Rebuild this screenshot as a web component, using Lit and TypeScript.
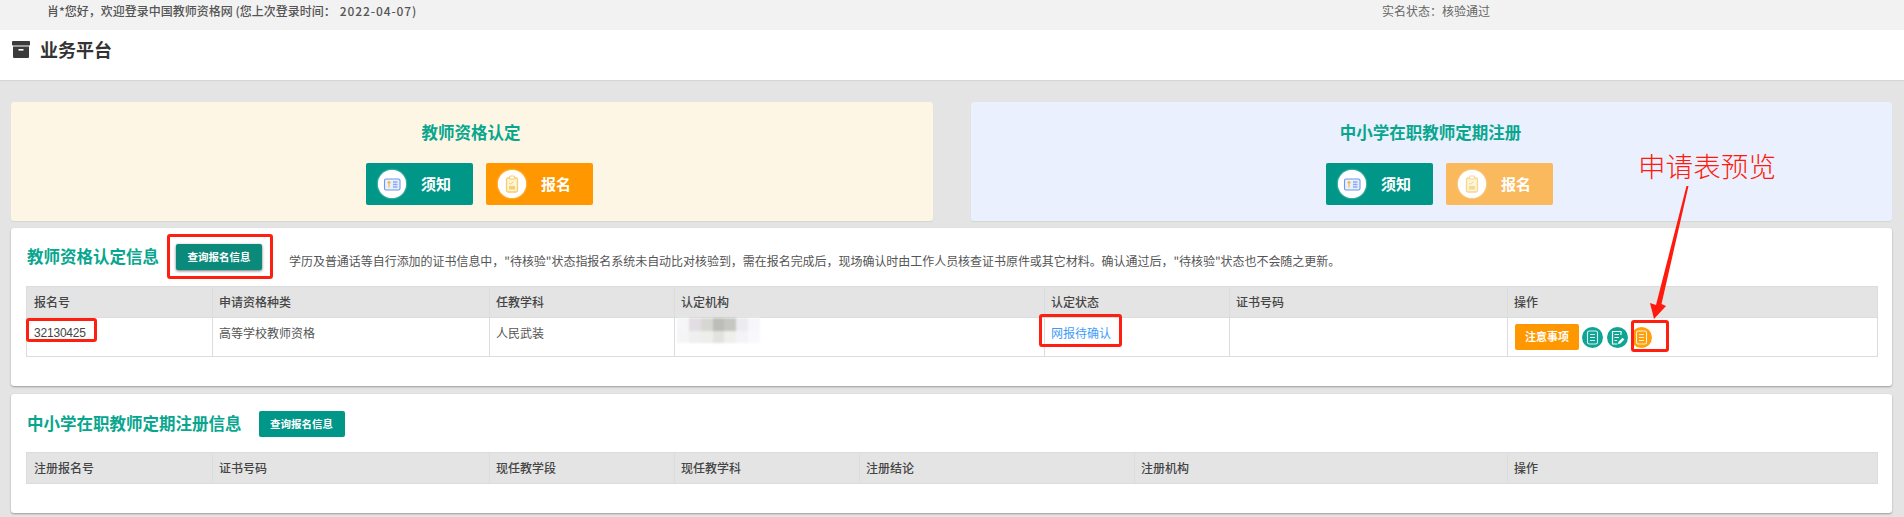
import { LitElement, html, css, svg } from "lit";
import { customElement } from "lit/decorators.js";

const docIcon = svg`<rect x="5.5" y="4" width="10" height="13" rx="1.8" fill="none" stroke="#fff" stroke-width="1.1" opacity=".85"/><path d="M8 7.500h5M8 10.500h5M8 13.500h5" stroke="#fff" stroke-width="1.1" opacity=".85"/>`;
const editIcon = svg`<path d="M14 8V4.500H5.500v12.500h5" fill="none" stroke="#fff" stroke-width="1.2"/><path d="M7.500 7.500h4.500M7.500 10.500h4.500M7.500 13.500h2.500" stroke="#fff" stroke-width="1.1"/><path d="M11 17l.5-2.200 4-4 1.800 1.800-4 4z" fill="#fff"/>`;

const SMUDGE = [
  "#f6f5f7", "#e2dde2", "#d6d7d3", "#bcbcb8", "#c6c6c2", "#ecebef", "#f7f7fb",
  "#f5f5f5", "#f0eff0", "#eeeeec", "#e2e2e0", "#efefed", "#f4f4f8", "#f9f9fd",
];

const BOXES = [
  { x: 167, y: 234, w: 106, h: 45 },
  { x: 26, y: 318, w: 71, h: 24 },
  { x: 1039, y: 314, w: 83, h: 33 },
  { x: 1631, y: 320, w: 38, h: 32 },
];

@customElement("app-root")
export class AppRoot extends LitElement {
  static styles = css`
    :host {
      display: block;
      position: relative;
      width: 1904px;
      height: 517px;
      overflow: hidden;
      background: #e4e4e4;
      font-family: "Noto Sans CJK SC", "Liberation Sans", sans-serif;
      font-size: 12px;
      color: #555;
    }
    .top {
      display: flex;
      height: 30px;
      background: #f2f2f2;
      padding-left: 47px;
      line-height: 22px;
      color: #555;
      box-sizing: border-box;
    }
    .welcome { flex: 0 0 1335px; font-weight: 500; white-space: nowrap; }
    .date { letter-spacing: 0.9px; margin-left: 4px; }
    .realname { font-size: 12px; color: #666; }
    .head {
      display: flex;
      align-items: flex-start;
      gap: 10px;
      height: 50px;
      box-sizing: border-box;
      padding: 10px 0 0 12px;
      background: #fff;
      box-shadow: 0 1px 1px #d6d6d6;
      font-size: 18px;
      font-weight: 700;
      color: #333;
      line-height: 18px;
    }
    .head svg { display: block; margin-top: 1px; }
    .main { padding: 22px 12px 0 11px; }
    .entries {
      display: grid;
      grid-template-columns: 922px 921px;
      gap: 38px;
      margin-bottom: 7px;
    }
    .entry {
      height: 119px;
      box-sizing: border-box;
      padding-top: 19px;
      border-radius: 3px;
      box-shadow: 0 1px 1px #d4d4d4;
      text-align: center;
    }
    .entry.cream { background: #fef6e5; --shift: 15px; }
    .entry.blue { background: #eaf0fd; --shift: 16px; }
    .entry h3 {
      margin: 0 0 19px;
      padding-right: 2px;
      font-size: 16.5px;
      line-height: 23px;
      font-weight: 700;
      color: #08a68e;
    }
    .actions {
      display: flex;
      justify-content: center;
      gap: 13px;
      padding-left: var(--shift);
    }
    .big {
      display: flex;
      align-items: center;
      gap: 15px;
      width: 107px;
      height: 42px;
      box-sizing: border-box;
      padding: 0 0 2px 12px;
      border-radius: 2px;
      color: #fff;
      font-size: 15px;
      font-weight: 700;
    }
    .big.teal { background: #009688; }
    .big.orange { background: #ff9800; }
    .big.muted { background: #f9b95c; }
    .disc {
      flex: none;
      width: 28px;
      height: 28px;
      margin-top: 2px;
      border-radius: 50%;
      background: #fff;
      box-shadow: 0 0 2px rgba(255, 255, 255, 0.9);
    }
    .disc svg { display: block; }
    .section {
      background: #fff;
      border-radius: 3px;
      box-shadow: 0 1px 2px #9a9a9a;
      padding: 16px 15px 30px 15px;
      margin-bottom: 8px;
    }
    .section.first { height: 158px; box-sizing: border-box; }
    .section.second { padding-top: 17px; height: 119px; box-sizing: border-box; }
    .title { display: flex; align-items: flex-start; height: 26px; margin-bottom: 16px; padding-left: 1px; }
    .section.second .title { margin-bottom: 15px; }
    .title h2 {
      margin: 0 17px 0 0;
      font-size: 16.5px;
      line-height: 24px;
      font-weight: 700;
      color: #08a68e;
      white-space: nowrap;
    }
    .query {
      flex: none;
      width: 86px;
      height: 26px;
      line-height: 25px;
      text-align: center;
      border-radius: 2px;
      background: #009688;
      color: #fff;
      font-size: 10.5px;
      font-weight: 700;
    }
    .query.raised { background: #0b897a; box-shadow: 0 1px 3px rgba(0, 0, 0, 0.55); }
    .note {
      margin-left: 27px;
      padding-top: 8px;
      line-height: 18px;
      font-size: 12px;
      letter-spacing: -0.04px;
      color: #555;
      white-space: nowrap;
    }
    table {
      width: 1851px;
      border-collapse: collapse;
      table-layout: fixed;
    }
    th {
      height: 31px;
      box-sizing: border-box;
      padding: 0 6px;
      background: #e4e4e4;
      border: 1px solid #dcdcdc;
      text-align: left;
      font-weight: 500;
      color: #444;
      line-height: 18px;
    }
    td {
      height: 38px;
      box-sizing: border-box;
      padding: 6px 6px;
      vertical-align: top;
      border: 1px solid #dcdcdc;
      line-height: 18px;
      color: #555;
    }
    th:first-child, td:first-child { padding-left: 7px; }
    td.flush { padding: 0; }
    td.digits { font-family: "Liberation Sans", sans-serif; letter-spacing: -0.2px; color: #444; }
    .smudge {
      display: grid;
      grid-template-columns: repeat(7, 1fr);
      grid-auto-rows: 12.5px;
      width: 83px;
      margin-left: 2px;
      filter: blur(1px);
    }
    .link { color: #3f9cf5; }
    .row-actions { display: flex; align-items: center; gap: 3px; margin-left: 1px; }
    .notice {
      width: 64px;
      height: 26px;
      line-height: 25px;
      text-align: center;
      border-radius: 2px;
      background: #ff9800;
      color: #fff;
      font-weight: 700;
      font-size: 11px;
    }
    .round { display: block; flex: none; }
    .round.mid { margin-left: 1px; }
    .box {
      position: absolute;
      box-sizing: border-box;
      border: 3px solid #ff1f10;
      border-radius: 3px;
    }
    .callout {
      position: absolute;
      left: 1638px;
      top: 147px;
      font-size: 27.6px;
      font-weight: 300;
      line-height: 36px;
      color: #ff1a0d;
      white-space: nowrap;
    }
    .arrow { position: absolute; left: 0; top: 0; pointer-events: none; }
  `;

  private disc(kind: "notice" | "form", fade = false) {
    const c = fade ? "#f6d990" : "#f8cf6a";
    return html`<span class="disc"><svg width="28" height="28" viewBox="0 0 28 28">
      ${kind === "notice"
        ? svg`<rect x="6.5" y="9" width="15.5" height="11" rx="1.5" fill="#e8efff" stroke="#6f98ea" stroke-width="1.1"/>
              <path d="M11 11.5v6M9.5 13l1.5-1.5 1.5 1.5" fill="none" stroke="#f2b53c" stroke-width="1.1"/>
              <path d="M15 12h4.5M15 14.5h4.5M15 17h4.5" stroke="#8cabee" stroke-width="1.4"/>`
        : svg`<rect x="8.5" y="8" width="11" height="14" rx="1.5" fill="#fdf3d6" stroke="${c}" stroke-width="1.3"/>
              <rect x="11.5" y="6" width="5" height="3" rx="1" fill="#fff" stroke="${c}" stroke-width="1.1"/>
              <path d="M11 16h6v3.5h-6z" fill="${c}"/><path d="M11 13l1.5 1.2 3-2.4" fill="none" stroke="${c}" stroke-width="1"/>`}
    </svg></span>`;
  }

  private round(color: string, icon: unknown, mid = false) {
    return html`<svg class="round ${mid ? "mid" : ""}" width="21" height="21" viewBox="0 0 21 21"><circle cx="10.5" cy="10.5" r="10.5" fill="${color}"/>${icon}</svg>`;
  }

  private cols(widths: number[]) {
    return html`<colgroup>${widths.map((w) => html`<col style="width:${w}px" />`)}</colgroup>`;
  }

  render() {
    return html`
      <div class="top">
        <span class="welcome">肖*您好，欢迎登录中国教师资格网 (您上次登录时间：<span class="date">2022-04-07</span>)</span>
        <span class="realname">实名状态：核验通过</span>
      </div>
      <div class="head">
        <svg width="18" height="17" viewBox="0 0 18 17">
          <rect x="0" y="0" width="18" height="4.5" rx="0.8" fill="#3b3b3b"/>
          <path d="M1 5.500h16v10.500a1 1 0 0 1-1 1H2a1 1 0 0 1-1-1z" fill="#3b3b3b"/>
          <rect x="6.500" y="8" width="5" height="1.6" fill="#fff"/>
        </svg>
        <span>业务平台</span>
      </div>
      <div class="main">
        <div class="entries">
          <div class="entry cream">
            <h3>教师资格认定</h3>
            <div class="actions">
              <div class="big teal">${this.disc("notice")}<span>须知</span></div>
              <div class="big orange">${this.disc("form")}<span>报名</span></div>
            </div>
          </div>
          <div class="entry blue">
            <h3>中小学在职教师定期注册</h3>
            <div class="actions">
              <div class="big teal">${this.disc("notice")}<span>须知</span></div>
              <div class="big muted">${this.disc("form", true)}<span>报名</span></div>
            </div>
          </div>
        </div>

        <div class="section first">
          <div class="title">
            <h2>教师资格认定信息</h2>
            <div class="query raised">查询报名信息</div>
            <div class="note">学历及普通话等自行添加的证书信息中，"待核验"状态指报名系统未自动比对核验到，需在报名完成后，现场确认时由工作人员核查证书原件或其它材料。确认通过后，"待核验"状态也不会随之更新。</div>
          </div>
          <table>
            ${this.cols([186, 277, 185, 370, 185, 278, 370])}
            <thead><tr>
              <th>报名号</th><th>申请资格种类</th><th>任教学科</th><th>认定机构</th><th>认定状态</th><th>证书号码</th><th>操作</th>
            </tr></thead>
            <tbody><tr>
              <td class="digits">32130425</td>
              <td>高等学校教师资格</td>
              <td>人民武装</td>
              <td class="flush"><div class="smudge">${SMUDGE.map((c) => html`<i style="background:${c}"></i>`)}</div></td>
              <td class="link">网报待确认</td>
              <td></td>
              <td><div class="row-actions">
                <div class="notice">注意事项</div>
                ${this.round("#0ea594", docIcon)}
                ${this.round("#0ea594", editIcon, true)}
                ${this.round("#ff9f0a", docIcon)}
              </div></td>
            </tr></tbody>
          </table>
        </div>

        <div class="section second">
          <div class="title">
            <h2>中小学在职教师定期注册信息</h2>
            <div class="query">查询报名信息</div>
          </div>
          <table>
            ${this.cols([186, 277, 185, 185, 275, 373, 370])}
            <thead><tr>
              <th>注册报名号</th><th>证书号码</th><th>现任教学段</th><th>现任教学科</th><th>注册结论</th><th>注册机构</th><th>操作</th>
            </tr></thead>
          </table>
        </div>
      </div>

      ${BOXES.map((b) => html`<div class="box" style="left:${b.x}px;top:${b.y}px;width:${b.w}px;height:${b.h}px"></div>`)}
      <div class="callout">申请表预览</div>
      <svg class="arrow" width="1904" height="517">
        <path d="M1686.500 186 L1688.500 186 L1661.500 304 L1666 306 L1654 319 L1650 303 L1656 305 Z" fill="#ff1a0d"/>
      </svg>
    `;
  }
}
